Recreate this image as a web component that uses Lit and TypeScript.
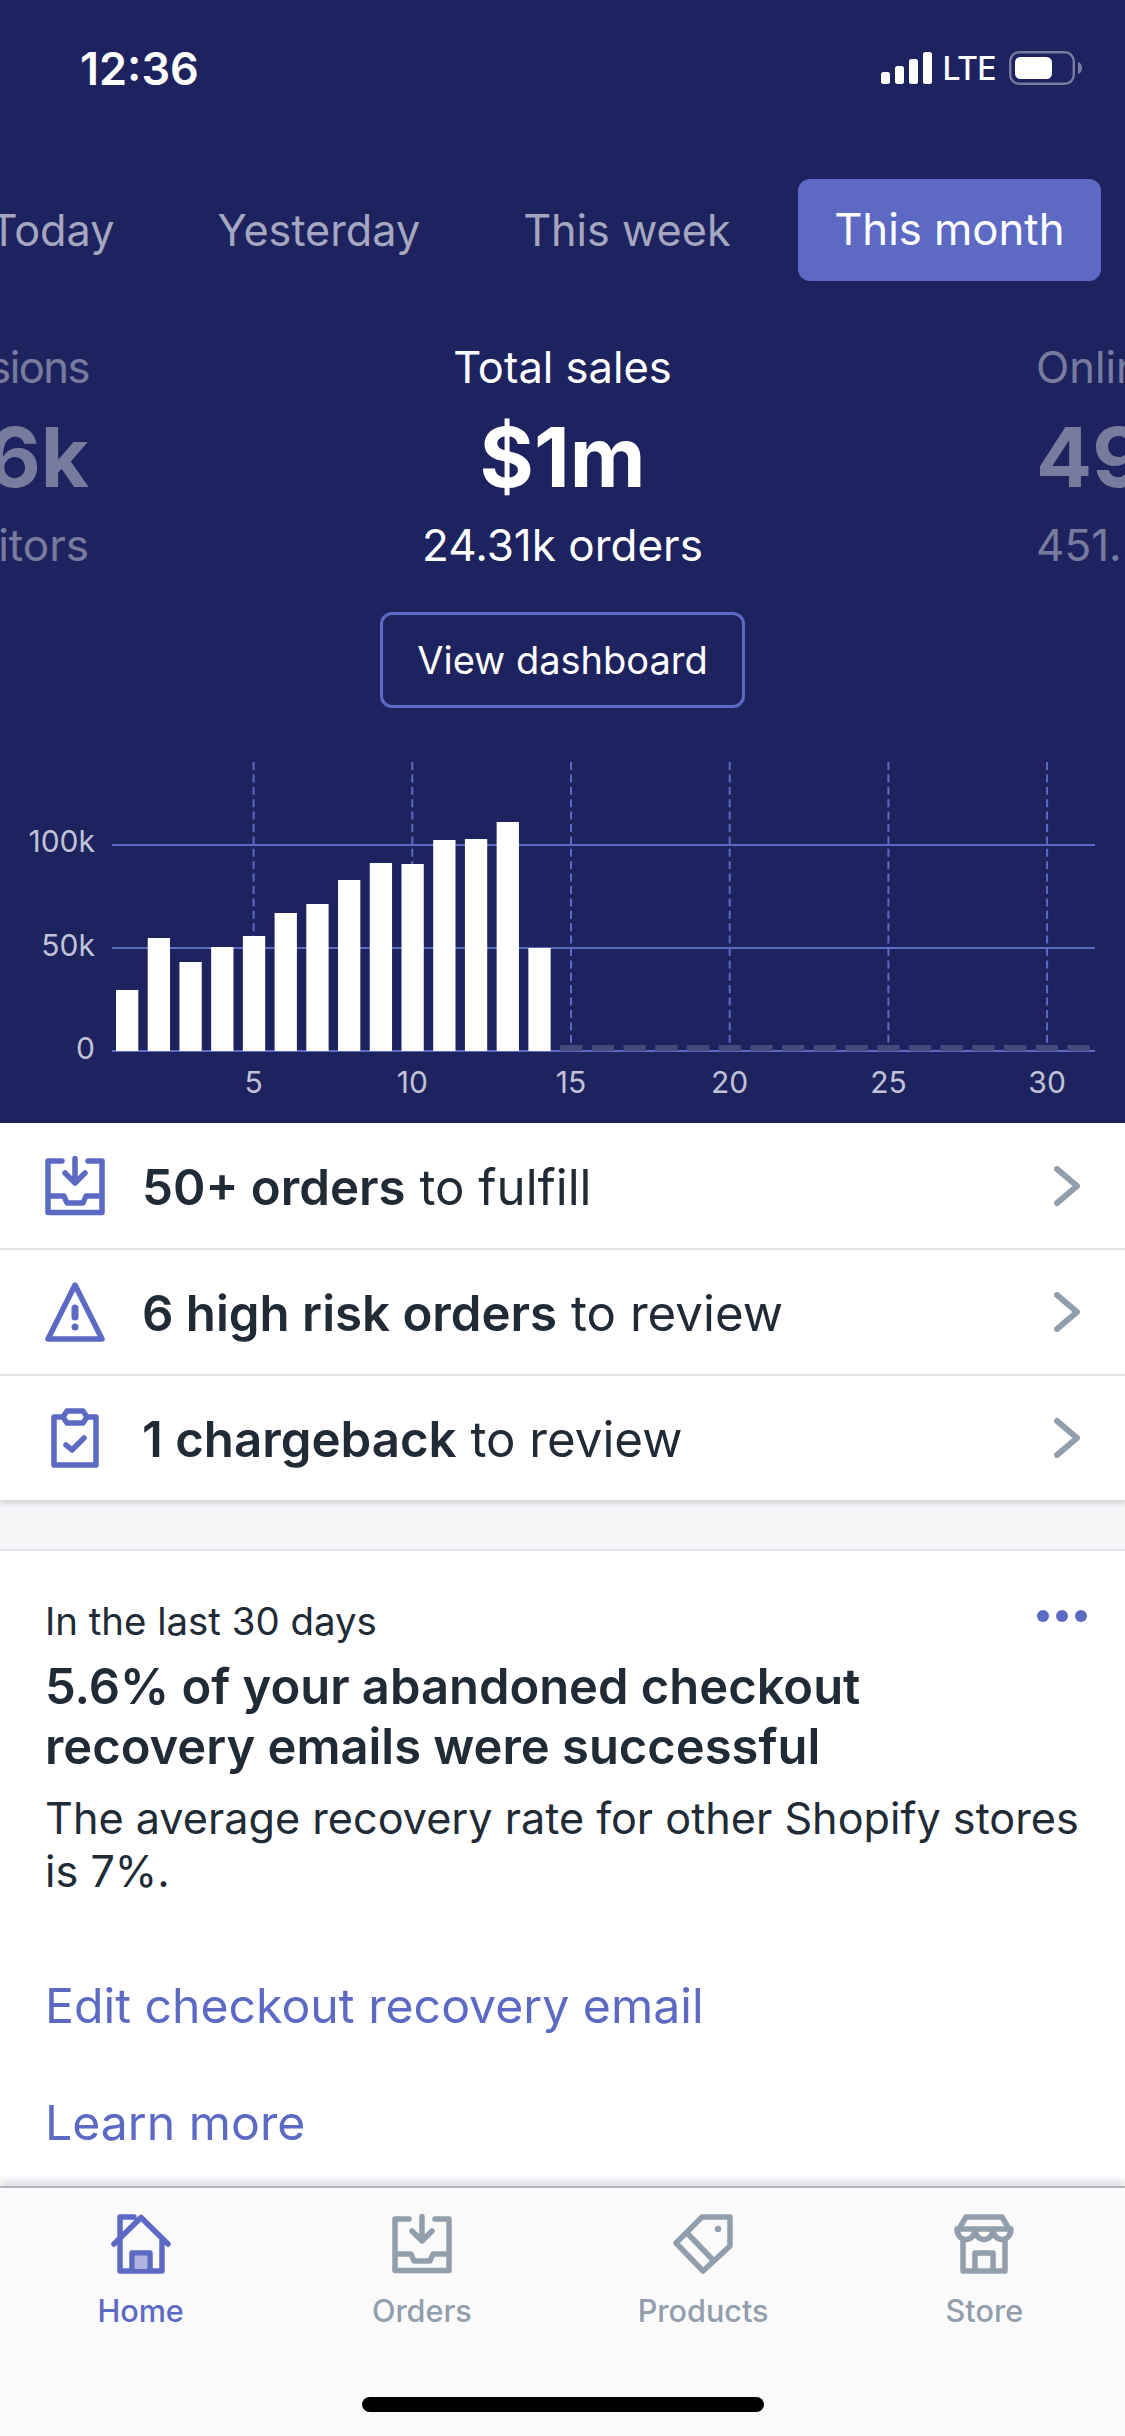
import { LitElement, css, html, svg } from "lit";
import { customElement } from "lit/decorators.js";

const PERIODS = ["Today", "Yesterday", "This week", "This month"];
// bar tops in page pixels, read off the chart; baseline is y=1051
const BAR_TOPS = [990, 938, 962, 947, 936, 913, 904, 880, 863, 864, 840, 839, 822, 948];
const BASE_Y = 1051;
const STEP = 31.72;

const inboxIcon = svg`<path d="M17 5H3V56.5H57V5H43M3 40H19L22 47H38L41 40H57M30 2.5V26M20 17L30 27L40 17"/>`;
const warnIcon = svg`<path d="M30 3L57 57H3Z"/><path d="M30 26V35M30 45V45.1" class="thick"/>`;
const clipIcon = svg`<path d="M17 9H9V57H51V9H43"/><path d="M22 3H38L42 9L38 15H22L18 9ZM21 37L27 42L39 30"/>`;
const homeIcon = svg`<path d="M3 30L30 3.5L57 30M9 24V3H23M9 24V57H51V24M21 57V39H39V57"/><rect class="tint" x="24" y="42" width="12" height="13"/>`;
const tagIcon = svg`<path d="M29 3H57V32L30 57L3 29ZM16 21L39 45"/><circle class="dot" cx="45" cy="15" r="3.2"/>`;
const storeIcon = svg`<path d="M12 3H48L55 15H5ZM3 15C3 29 21 29 21 15C21 29 39 29 39 15C39 29 57 29 57 15M9 27V57H51V27M21 57V39H39V57"/>`;

const TABS = [
  { label: "Home", icon: homeIcon, active: true },
  { label: "Orders", icon: inboxIcon, active: false },
  { label: "Products", icon: tagIcon, active: false },
  { label: "Store", icon: storeIcon, active: false },
];

@customElement("app-root")
export class AppRoot extends LitElement {
  static styles = css`
    :host {
      display: flex;
      flex-direction: column;
      width: 1125px;
      height: 2436px;
      overflow: hidden;
      background: #fff;
      font-family: Inter, "Liberation Sans", sans-serif;
      color: #212b36;
    }
    .hero {
      background: #1d235e;
      color: #fff;
      height: 1123px;
      flex: none;
    }
    .status {
      display: flex;
      align-items: center;
      height: 136px;
      padding: 0 43px 0 80px;
      justify-content: space-between;
    }
    .time {
      font-size: 45px;
      font-weight: 600;
    }
    .status-right {
      display: flex;
      align-items: center;
    }
    .lte {
      font-size: 32px;
      font-weight: 500;
      letter-spacing: -0.6px;
      margin: 0 13px 0 11px;
    }
    .periods {
      display: flex;
      justify-content: flex-end;
      gap: 29px;
      margin-top: 43px;
      padding-right: 24px;
      overflow: hidden;
    }
    .period {
      flex: none;
      height: 102px;
      line-height: 102px;
      padding: 0 37px;
      font-size: 43.2px;
      color: #a4a7bf;
      border-radius: 12px;
    }
    .period.on {
      background: #5c6ac4;
      color: #fff;
      font-size: 43.7px;
      padding: 0 36.5px;
      margin-left: 1px;
    }
    .stats {
      display: flex;
      margin-top: 56px;
      text-align: center;
    }
    .stat {
      flex: 1;
      display: flex;
      flex-direction: column;
      align-items: center;
    }
    .stat.side {
      flex: none;
      width: 89px;
      overflow: hidden;
      white-space: nowrap;
      opacity: 0.4;
    }
    .stat.left {
      align-items: flex-end;
    }
    .stat.left .stat-label {
      letter-spacing: -1.5px;
    }
    .stat.right {
      align-items: flex-start;
    }
    .stat-label,
    .stat-sub {
      font-size: 43.5px;
      line-height: 60px;
    }
    .stat-sub {
      font-size: 44px;
    }
    .stat-value {
      font-size: 83px;
      line-height: 100px;
      font-weight: 700;
      margin: 10px 0 8px;
    }
    .view {
      display: block;
      box-sizing: border-box;
      width: 365px;
      height: 96px;
      margin: 37px auto 32px;
      border: 3px solid #5c6ac4;
      border-radius: 12px;
      font-size: 38px;
      line-height: 90px;
      text-align: center;
    }
    .chart {
      display: block;
    }
    .chart text {
      font-size: 30px;
      fill: #c0c2d6;
    }
    .tasks {
      flex: none;
      box-shadow: 0 3px 6px rgba(33, 43, 54, 0.2);
      position: relative;
    }
    .task {
      display: flex;
      align-items: center;
      box-sizing: border-box;
      height: 126px;
      padding: 0 45px;
      font-size: 49.2px;
      border-bottom: 2px solid #dfe3e8;
    }
    .task:first-child {
      height: 127px;
    }
    .task:last-child {
      height: 124px;
      border-bottom: 0;
    }
    .task b {
      font-weight: 600;
    }
    .task-text {
      flex: 1;
      margin-left: 37px;
      padding-top: 2px;
    }
    .ico {
      flex: none;
      width: 60px;
      height: 60px;
      fill: none;
      stroke: #5c6ac4;
      stroke-width: 5.5;
      stroke-linejoin: round;
      stroke-linecap: round;
    }
    .ico .thick {
      stroke-width: 7;
    }
    .chev {
      flex: none;
      width: 26px;
      height: 40px;
      fill: none;
      stroke: #919eab;
      stroke-width: 6;
      stroke-linecap: round;
      stroke-linejoin: round;
    }
    .gap {
      flex: none;
      height: 49px;
      background: #f4f6f8;
      border-bottom: 2px solid #dfe3e8;
    }
    .card {
      flex: 1;
      padding: 45px 30px 0 45px;
    }
    .card-top {
      display: flex;
      justify-content: space-between;
      font-size: 38.4px;
      line-height: 50px;
      padding-right: 8px;
    }
    .dots {
      width: 50px;
      height: 12px;
      margin-top: 14px;
      fill: #5c6ac4;
    }
    h2 {
      margin: 11px 0 15px;
      font-size: 48.9px;
      line-height: 60px;
      font-weight: 600;
    }
    p {
      margin: 0;
      font-size: 43.2px;
      line-height: 53px;
    }
    .link {
      display: block;
      color: #5c6ac4;
      font-size: 48.2px;
      line-height: 60px;
      margin-top: 57px;
    }
    p + .link {
      margin-top: 78px;
    }
    .tabbar {
      flex: none;
      height: 250px;
      box-sizing: border-box;
      background: #fafafa;
      border-top: 2px solid #b2b5b9;
      box-shadow: 0 -6px 6px rgba(145, 158, 171, 0.28);
      position: relative;
      display: grid;
      grid-template-columns: repeat(4, 1fr);
      align-content: start;
      padding-top: 26px;
    }
    .tab {
      display: flex;
      flex-direction: column;
      align-items: center;
      color: #919eab;
      font-size: 30.6px;
      font-weight: 500;
    }
    .tab .ico {
      stroke: #919eab;
    }
    .tab .dot {
      fill: #919eab;
      stroke: none;
    }
    .tab.on {
      color: #5c6ac4;
    }
    .tab.on .ico {
      stroke: #5c6ac4;
    }
    .tint {
      fill: #aeb4df;
      stroke: none;
    }
    .tab span {
      line-height: 40px;
      margin-top: 17px;
    }
    .indicator {
      position: absolute;
      left: 362px;
      bottom: 24px;
      width: 402px;
      height: 15px;
      border-radius: 8px;
      background: #000;
    }
  `;

  private renderChart() {
    const bars = BAR_TOPS.map(
      (top, i) => svg`<rect x=${116 + i * STEP} y=${top} width="22.3" height=${BASE_Y - top} fill="#fff"/>`
    );
    const empties = Array.from({ length: 17 }, (_, i) => i).map(
      (i) => svg`<rect x=${560 + i * STEP} y="1045" width="22.3" height="6" fill="#454a7c"/>`
    );
    const days = [5, 10, 15, 20, 25, 30];
    return html`
      <svg class="chart" width="1125" height="383" viewBox="0 740 1125 383">
        ${days.map((d, i) => {
          const x = 253.6 + i * 158.7;
          return svg`
            <line x1=${x} x2=${x} y1="762" y2="1045" stroke="#5c6ac4" stroke-width="2" stroke-dasharray="8 4.4"/>
            <text x=${x} y="1093" text-anchor="middle">${d}</text>`;
        })}
        ${[845, 948, 1051].map(
          (y) => svg`<line x1="112" x2="1095" y1=${y} y2=${y} stroke="#5c6ac4" stroke-width="2"/>`
        )}
        <text x="95" y="852" text-anchor="end">100k</text>
        <text x="95" y="956" text-anchor="end">50k</text>
        <text x="95" y="1059" text-anchor="end">0</text>
        ${empties} ${bars}
      </svg>
    `;
  }

  render() {
    return html`
      <section class="hero">
        <div class="status">
          <span class="time">12:36</span>
          <div class="status-right">
            <svg width="51" height="32" viewBox="0 0 51 32" fill="#fff">
              <rect x="0" y="20" width="9" height="12" rx="2.5" />
              <rect x="14" y="14" width="9" height="18" rx="2.5" />
              <rect x="28" y="7" width="9" height="25" rx="2.5" />
              <rect x="42" y="0" width="9" height="32" rx="2.5" />
            </svg>
            <span class="lte">LTE</span>
            <svg width="73" height="34" viewBox="0 0 73 34">
              <rect x="1.2" y="1.2" width="63.6" height="31.6" rx="9" fill="none" stroke="#fff" stroke-opacity="0.4" stroke-width="2.4" />
              <rect x="6" y="6" width="37" height="22" rx="5.5" fill="#fff" />
              <path d="M69 11c2.5.6 4 3 4 6s-1.500 5.400-4 6z" fill="#fff" fill-opacity="0.4" />
            </svg>
          </div>
        </div>
        <div class="periods">
          ${PERIODS.map(
            (p) => html`<div class="period ${p === "This month" ? "on" : ""}">${p}</div>`
          )}
        </div>
        <div class="stats">
          <div class="stat side left">
            <div class="stat-label">Sessions</div>
            <div class="stat-value">736k</div>
            <div class="stat-sub">61k visitors</div>
          </div>
          <div class="stat">
            <div class="stat-label">Total sales</div>
            <div class="stat-value">$1m</div>
            <div class="stat-sub">24.31k orders</div>
          </div>
          <div class="stat side right">
            <div class="stat-label">Online</div>
            <div class="stat-value">49k</div>
            <div class="stat-sub">451.2k</div>
          </div>
        </div>
        <div class="view">View dashboard</div>
        ${this.renderChart()}
      </section>

      <section class="tasks">
        <div class="task">
          <svg class="ico" viewBox="0 0 60 60">${inboxIcon}</svg>
          <span class="task-text"><b>50+ orders</b> to fulfill</span>
          <svg class="chev" viewBox="0 0 26 40"><path d="M3 3L23 20L3 37" /></svg>
        </div>
        <div class="task">
          <svg class="ico" viewBox="0 0 60 60">${warnIcon}</svg>
          <span class="task-text"><b>6 high risk orders</b> to review</span>
          <svg class="chev" viewBox="0 0 26 40"><path d="M3 3L23 20L3 37" /></svg>
        </div>
        <div class="task">
          <svg class="ico" viewBox="0 0 60 60">${clipIcon}</svg>
          <span class="task-text"><b>1 chargeback</b> to review</span>
          <svg class="chev" viewBox="0 0 26 40"><path d="M3 3L23 20L3 37" /></svg>
        </div>
      </section>

      <div class="gap"></div>

      <section class="card">
        <div class="card-top">
          <span>In the last 30 days</span>
          <svg class="dots" viewBox="0 0 50 12">
            <circle cx="6" cy="6" r="6" /><circle cx="25" cy="6" r="6" /><circle cx="44" cy="6" r="6" />
          </svg>
        </div>
        <h2>5.6% of your abandoned checkout<br />recovery emails were successful</h2>
        <p>The average recovery rate for other Shopify stores is 7%.</p>
        <a class="link">Edit checkout recovery email</a>
        <a class="link">Learn more</a>
      </section>

      <nav class="tabbar">
        ${TABS.map(
          (t) => html`
            <div class="tab ${t.active ? "on" : ""}">
              <svg class="ico" viewBox="0 0 60 60">${t.icon}</svg>
              <span>${t.label}</span>
            </div>
          `
        )}
        <div class="indicator"></div>
      </nav>
    `;
  }
}
